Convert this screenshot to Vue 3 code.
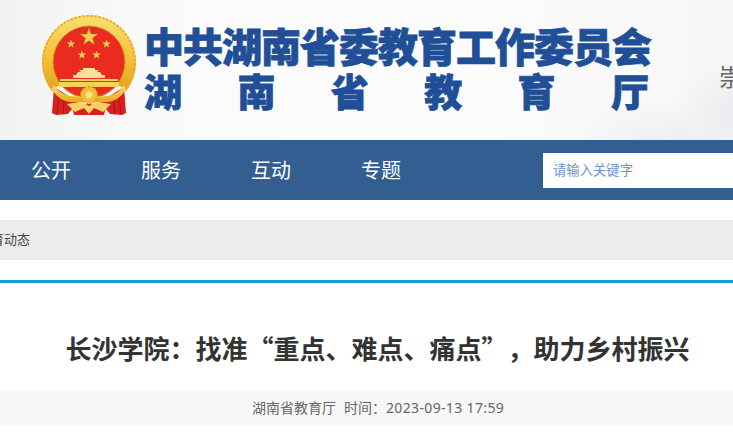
<template>
  <div class="page">
    <header class="banner">
      <svg class="emblem" viewBox="0 0 94 102" aria-hidden="true">
        <defs>
          <linearGradient id="gold" x1="0" y1="0" x2="0" y2="1">
            <stop offset="0" stop-color="#f7dc6c" />
            <stop offset="0.55" stop-color="#f3c238" />
            <stop offset="1" stop-color="#e6a51f" />
          </linearGradient>
        </defs>
        <!-- wreath -->
        <circle cx="47" cy="48" r="36.5" fill="#ea2b20" />
        <path d="M14.3 73.5 A41.5 41.5 0 1 1 79.7 73.5" fill="none" stroke="url(#gold)" stroke-width="11" />
        <path d="M10.8 76.3 A46 46 0 1 1 83.2 76.3" fill="none" stroke="#e6b02e" stroke-width="2" stroke-dasharray="2.5 1.5" />
        <circle cx="47" cy="48" r="36" fill="none" stroke="#d9951c" stroke-width="1" />
        <!-- ribbons -->
        <path d="M12 73 L10 99 L14 101 L26 100 L36 88 Z" fill="#d8201f" />
        <path d="M82 73 L84 99 L80 101 L68 100 L58 88 Z" fill="#d8201f" />
        <path d="M30 92 L47 90 L64 92 L62 101 L32 101 Z" fill="#d8201f" />
        <path d="M17 82 L15 100 M22 86 L21 100 M77 82 L79 100 M72 86 L73 100" stroke="#ad1414" stroke-width="1" fill="none" />
        <!-- stars -->
        <polygon :points="star(47, 23, 9.5)" fill="#f5cc4e" stroke="#a9700f" stroke-width="0.5" />
        <polygon :points="star(29, 30, 4.6)" fill="#f5cc4e" />
        <polygon :points="star(64.5, 30, 4.6)" fill="#f5cc4e" />
        <polygon :points="star(40, 41, 4.6)" fill="#f5cc4e" />
        <polygon :points="star(54.5, 41, 4.6)" fill="#f5cc4e" />
        <!-- gate -->
        <path d="M31 64 V61 H34 L36 58 H39 L37 56 H41 V54 H53 V56 H57 L55 58 H58 L60 61 H63 V64 Z" fill="#f9e09a" />
        <path d="M18 65 H76 V67 H18 Z M17 68 H77 V73 H17 Z" fill="#f6cf5c" />
        <!-- gold sash and gear -->
        <path d="M12 71 Q20 84 37 82 L57 82 Q74 84 82 71 L84 75 Q76 90 58 88 L36 88 Q18 90 10 75 Z" fill="url(#gold)" />
        <circle cx="47" cy="81" r="8.5" fill="#f1bf35" stroke="#d7961a" stroke-width="1.4" stroke-dasharray="2 1.5" />
        <circle cx="47" cy="81" r="3.5" fill="#f9e08a" />
        <path d="M25 90 L39 88 L47 92 L55 88 L69 90 L61 98 L52 94 L47 100 L42 94 L33 98 Z" fill="#f6d25e" />
      </svg>
      <div class="names">
        <div class="name-top">中共湖南省委教育工作委员会</div>
        <div class="name-bottom">
          <span v-for="c in deptName" :key="c">{{ c }}</span>
        </div>
      </div>
      <div class="ink">崇</div>
    </header>

    <nav class="nav">
      <div class="nav-items">
        <a v-for="item in navItems" :key="item" class="nav-item">{{ item }}</a>
      </div>
      <div class="search">请输入关键字</div>
    </nav>

    <div class="crumb"><span>教育动态</span></div>

    <div class="rule"></div>

    <h1 class="title">长沙学院：找准“重点、难点、痛点”，助力乡村振兴</h1>

    <div class="meta">
      <span>湖南省教育厅</span>
      <span>时间：<span class="stamp">2023-09-13 17:59</span></span>
    </div>
  </div>
</template>

<script setup>
const navItems = ['公开', '服务', '互动', '专题']
const deptName = ['湖', '南', '省', '教', '育', '厅']

// five pointed star, cx/cy centre, r outer radius
const star = (cx, cy, r) => {
  const pts = []
  for (let i = 0; i < 10; i++) {
    const rad = i % 2 === 0 ? r : r * 0.4
    const a = (Math.PI / 5) * i - Math.PI / 2
    pts.push((cx + rad * Math.cos(a)).toFixed(2) + ',' + (cy + rad * Math.sin(a)).toFixed(2))
  }
  return pts.join(' ')
}
</script>

<style>
body {
  overflow: hidden;
  background: #fff;
}
</style>

<style scoped>
.page {
  width: 733px;
  height: 435px;
  overflow: hidden;
  font-family: "Liberation Sans", "Noto Sans CJK SC", sans-serif;
  background: #fff;
}
.banner {
  position: relative;
  height: 140px;
  display: flex;
  align-items: flex-start;
  padding-left: 42px;
  box-sizing: border-box;
  overflow: hidden;
  background:
    radial-gradient(ellipse 110px 40px at 670px 140px, #eeeff1 0%, rgba(238, 239, 241, 0) 100%),
    radial-gradient(ellipse 60px 60px at 733px 115px, #eaebee 0%, rgba(234, 235, 238, 0) 100%),
    linear-gradient(90deg, #f2f2f3 0%, #fafafa 22%, #fcfcfc 60%, #f7f7f8 100%);
}
.emblem {
  width: 94px;
  height: 102px;
  margin-top: 14px;
  flex: none;
}
.names {
  margin-left: 8px;
  margin-top: 24px;
  width: 507px;
  font-family: "Noto Sans CJK SC", sans-serif;
  font-weight: 900;
  color: #204f98;
  -webkit-text-stroke: 0.8px #204f98;
}
.name-top {
  font-size: 40px;
  line-height: 43px;
  white-space: nowrap;
  letter-spacing: -1px;
}
.name-bottom {
  display: flex;
  justify-content: space-between;
  font-size: 38px;
  line-height: 46px;
  padding-right: 2px;
}
.ink {
  position: absolute;
  left: 719px;
  top: 62px;
  font-family: "Noto Sans CJK SC", sans-serif;
  font-size: 24px;
  line-height: 28px;
  color: #666;
}
.nav {
  height: 60px;
  background: #335e92;
  display: flex;
  align-items: flex-start;
  justify-content: space-between;
}
.nav-items {
  display: flex;
  padding-left: 31px;
}
.nav-item {
  width: 110px;
  font-size: 20px;
  line-height: 62px;
  color: #fff;
}
.search {
  width: 190px;
  height: 35px;
  margin-top: 13px;
  padding-left: 10px;
  box-sizing: border-box;
  background: #fff;
  color: #6d95c8;
  font-size: 13.33px;
  line-height: 36px;
}
.crumb {
  height: 40px;
  margin-top: 20px;
  background: #ececec;
  overflow: hidden;
  font-size: 13px;
  line-height: 40px;
  color: #444;
}
.crumb span {
  display: block;
  margin-left: -22px;
}
.rule {
  height: 3px;
  margin-top: 20px;
  background: #12a0d4;
}
.title {
  margin: 0;
  height: 107px;
  padding-left: 22px;
  text-align: center;
  font-family: "Noto Sans CJK SC", sans-serif;
  font-size: 26px;
  font-weight: 700;
  line-height: 130px;
  color: #333;
  white-space: nowrap;
  text-spacing-trim: space-all;
}
.meta {
  height: 36px;
  padding-left: 252px;
  background: #f7f7f7;
  display: flex;
  gap: 8px;
  font-size: 14px;
  line-height: 36px;
  color: #666;
}
.stamp {
  font-family: "Noto Sans", "Liberation Sans", sans-serif;
  letter-spacing: 0.35px;
}
</style>
